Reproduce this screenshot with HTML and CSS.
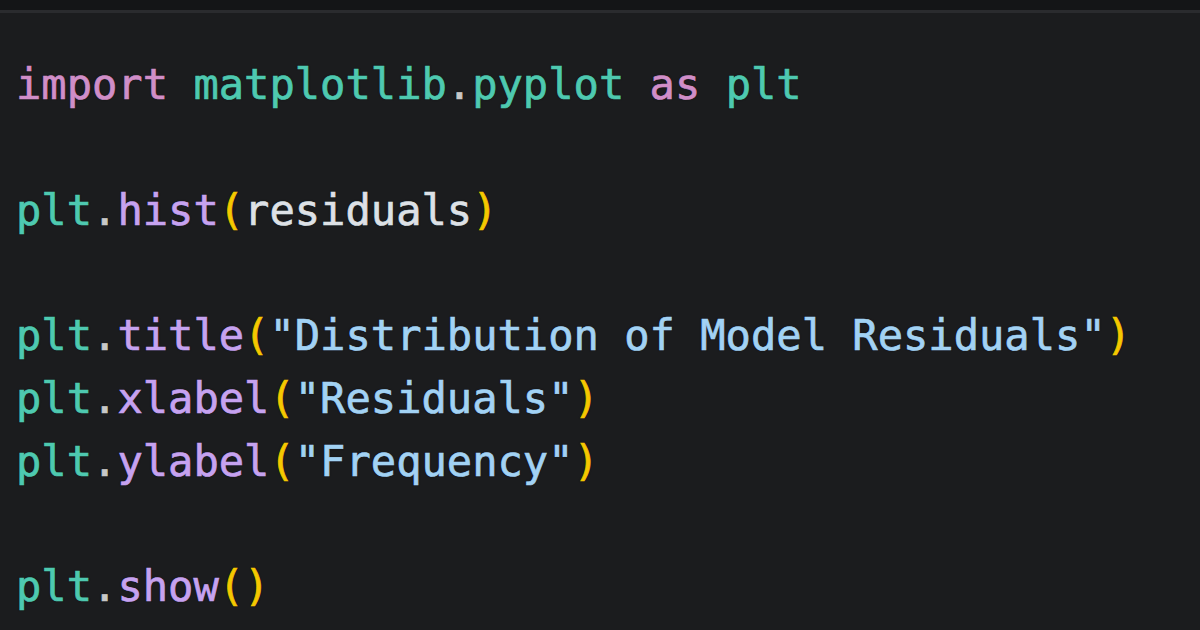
FILE: index.html
```html
<!DOCTYPE html>
<html lang="en">
<head>
<meta charset="utf-8">
<title>matplotlib residuals</title>
<link rel="stylesheet" href="styles.css">
</head>
<body>
<div class="window">
  <div class="titlebar"></div>
  <pre class="code"><code><span class="kw">import</span> <span class="mod">matplotlib</span><span class="dot">.</span><span class="mod">pyplot</span> <span class="kw">as</span> <span class="mod">plt</span>

<span class="mod">plt</span><span class="dot">.</span><span class="fn">hist</span><span class="par">(</span><span class="var">residuals</span><span class="par">)</span>

<span class="mod">plt</span><span class="dot">.</span><span class="fn">title</span><span class="par">(</span><span class="str">"Distribution of Model Residuals"</span><span class="par">)</span>
<span class="mod">plt</span><span class="dot">.</span><span class="fn">xlabel</span><span class="par">(</span><span class="str">"Residuals"</span><span class="par">)</span>
<span class="mod">plt</span><span class="dot">.</span><span class="fn">ylabel</span><span class="par">(</span><span class="str">"Frequency"</span><span class="par">)</span>

<span class="mod">plt</span><span class="dot">.</span><span class="fn">show</span><span class="par">()</span></code></pre>
</div>
</body>
</html>
```

FILE: styles.css
```css
html, body {
  margin: 0;
  padding: 0;
  background: #1b1c1e;
}

.window {
  width: 1200px;
  height: 630px;
  overflow: hidden;
  background: #1b1c1e;
  display: flex;
  flex-direction: column;
}

.titlebar {
  height: 10px;
  background: #141517;
  border-bottom: 3px solid #2a2b2e;
  flex: none;
}

.code {
  margin: 0;
  padding: 41px 0 0 16px;
  font-family: "DejaVu Sans Mono", "Liberation Mono", monospace;
  font-size: 42.1px;
  line-height: 62.75px;
  color: #dde1e6;
  white-space: pre;
  -webkit-text-stroke: 0.7px currentColor;
  text-shadow: 0 0 2px rgba(0, 0, 0, 0.6);
}

.kw { color: #d08ec8; }
.mod { color: #4ec9b0; }
.dot { color: #c8c8c8; }
.fn { color: #c6a2f0; }
.par { color: #f5c800; }
.var { color: #dde1e6; }
.str { color: #a2d2f4; }
```
